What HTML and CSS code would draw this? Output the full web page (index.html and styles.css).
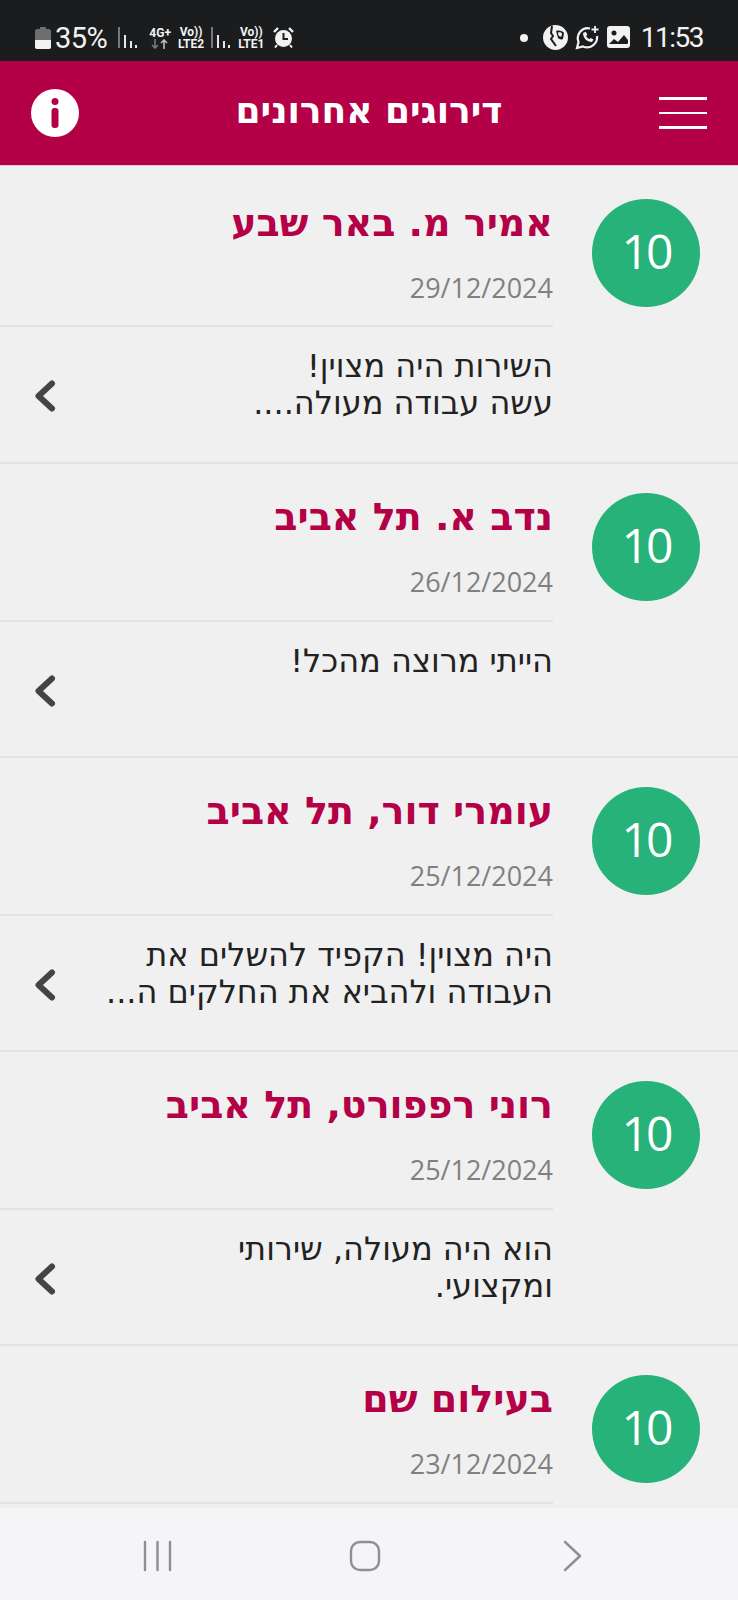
FILE: index.html
```html
<!DOCTYPE html>
<html lang="he" dir="rtl">
<head>
  <meta charset="utf-8" />
  <title>דירוגים אחרונים</title>
  <meta name="viewport" content="width=device-width, initial-scale=1" />
  <link rel="stylesheet" href="styles.css">
</head>
<body>
  <div class="screen">
    <!-- STATUS BAR -->
    <div class="statusBar" dir="ltr">
      <div class="statusGroup">
        <svg class="battery" width="16" height="22" viewBox="0 0 16 22">
          <path d="M5 0h6v2h3a2 2 0 0 1 2 2v16a2 2 0 0 1-2 2H2a2 2 0 0 1-2-2V4a2 2 0 0 1 2-2h3z" fill="#6d6e70" />
          <path d="M0 13h16v7a2 2 0 0 1-2 2H2a2 2 0 0 1-2-2z" fill="#f2f2f2" />
        </svg>
        <span class="percent">35%</span>
        <svg class="signal" width="20" height="21" viewBox="0 0 20 21">
          <rect x="0" y="0" width="2" height="21" fill="#77787a" />
          <rect x="6" y="8" width="2" height="13" fill="#e8e8e8" />
          <rect x="12" y="14" width="2" height="7" fill="#e8e8e8" />
          <rect x="17" y="18" width="2" height="3" fill="#e8e8e8" />
        </svg>
        <div class="netTag netFour">
          <span>4G+</span>
          <svg width="18" height="10" viewBox="0 0 18 10" fill="none" stroke-width="1.6">
            <path d="M4 0v9M1 6l3 3 3-3" stroke="#77787a" />
            <path d="M13 10V1M10 4l3-3 3 3" stroke="#bdbdbd" />
          </svg>
        </div>
        <div class="netTag"><span>Vo))</span><span>LTE2</span></div>
        <svg class="signal" width="20" height="21" viewBox="0 0 20 21">
          <rect x="0" y="0" width="2" height="21" fill="#77787a" />
          <rect x="6" y="8" width="2" height="13" fill="#e8e8e8" />
          <rect x="12" y="14" width="2" height="7" fill="#e8e8e8" />
          <rect x="17" y="18" width="2" height="3" fill="#e8e8e8" />
        </svg>
        <div class="netTag"><span>Vo))</span><span>LTE1</span></div>
        <svg class="alarm" width="21" height="21" viewBox="0 0 21 21">
          <circle cx="10.5" cy="11.5" r="8.5" fill="#f2f2f2" />
          <path d="M10.5 6v6h4.5" fill="none" stroke="#1b1c1e" stroke-width="2" />
          <path d="M1 5l4-4M20 5l-4-4" stroke="#f2f2f2" stroke-width="2.4" />
          <path d="M4 18l-2 2.500M17 18l2 2.500" stroke="#f2f2f2" stroke-width="2" />
        </svg>
      </div>
      <div class="statusGroup">
        <span class="dot"></span>
        <svg class="appIcon" width="25" height="25" viewBox="0 0 25 25">
          <circle cx="12.500" cy="12.500" r="12.500" fill="#f2f2f2" />
          <path d="M9 1l-1 7 2 3-2 3 5 7" fill="none" stroke="#1b1c1e" stroke-width="2" />
          <path d="M13 6c3-1 7 0 8 2l-1 6c-2 1-4 0-5-1z" fill="#1b1c1e" />
          <path d="M15 7.500c2-.5 3 0 4 1l-.5 3c-1 0-2 0-3-1z" fill="#f2f2f2" />
        </svg>
        <svg class="appIcon" width="25" height="25" viewBox="0 0 25 25" fill="none" stroke="#f2f2f2">
          <path d="M15 3.500A10 10 0 0 0 3.500 17L2 23l6-1.600A10 10 0 0 0 22 11" stroke-width="2.200" />
          <path d="M8 8c0 5 4 9 9 9l1.500-2.500-3-1.500-1.200 1.200c-1.500-.7-2.500-1.800-3.200-3.200l1.200-1.200-1.500-3z" fill="#f2f2f2" stroke="none" />
          <path d="M20 1v7M16.500 4.500h7" stroke-width="1.800" />
        </svg>
        <svg class="appIcon" width="23" height="23" viewBox="0 0 23 23">
          <rect x="0" y="0" width="23" height="22" rx="3" fill="#f2f2f2" />
          <circle cx="7" cy="7" r="2.500" fill="#1b1c1e" />
          <path d="M2 18l5-5 4 3 6-7 4 5v3a1 1 0 0 1-1 1H3z" fill="#1b1c1e" />
        </svg>
        <span class="clock">11:53</span>
      </div>
    </div>

    <!-- HEADER -->
    <header class="topBar">
      <div class="menuBtn"><span></span><span></span><span></span></div>
      <h1>דירוגים אחרונים</h1>
      <svg class="infoBtn" width="48" height="48" viewBox="0 0 48 48">
        <circle cx="24" cy="24" r="24" fill="#fff" />
        <circle cx="24" cy="12.500" r="3.500" fill="#b30047" />
        <rect x="20.500" y="19" width="7" height="20" rx="3" fill="#b30047" />
      </svg>
    </header>

    <!-- LIST -->
    <main class="reviewList">
      <article class="review">
        <div class="score">10</div>
        <div class="reviewBody">
          <div class="reviewHead">
            <h2>אמיר מ. באר שבע</h2>
            <div class="reviewDate">29/12/2024</div>
          </div>
          <div class="reviewText">
            <p>השירות היה מצוין!<br>עשה עבודה מעולה....</p>
            <svg class="chevron" width="22" height="32" viewBox="0 0 22 32"><path d="M18 3.500 4.500 16 18 28.500" /></svg>
          </div>
        </div>
      </article>

      <article class="review">
        <div class="score">10</div>
        <div class="reviewBody">
          <div class="reviewHead">
            <h2>נדב א. תל אביב</h2>
            <div class="reviewDate">26/12/2024</div>
          </div>
          <div class="reviewText">
            <p>הייתי מרוצה מהכל!</p>
            <svg class="chevron" width="22" height="32" viewBox="0 0 22 32"><path d="M18 3.500 4.500 16 18 28.500" /></svg>
          </div>
        </div>
      </article>

      <article class="review">
        <div class="score">10</div>
        <div class="reviewBody">
          <div class="reviewHead">
            <h2>עומרי דור, תל אביב</h2>
            <div class="reviewDate">25/12/2024</div>
          </div>
          <div class="reviewText">
            <p>היה מצוין! הקפיד להשלים את<br>העבודה ולהביא את החלקים ה...</p>
            <svg class="chevron" width="22" height="32" viewBox="0 0 22 32"><path d="M18 3.500 4.500 16 18 28.500" /></svg>
          </div>
        </div>
      </article>

      <article class="review">
        <div class="score">10</div>
        <div class="reviewBody">
          <div class="reviewHead">
            <h2>רוני רפפורט, תל אביב</h2>
            <div class="reviewDate">25/12/2024</div>
          </div>
          <div class="reviewText">
            <p>הוא היה מעולה, שירותי<br>ומקצועי.</p>
            <svg class="chevron" width="22" height="32" viewBox="0 0 22 32"><path d="M18 3.500 4.500 16 18 28.500" /></svg>
          </div>
        </div>
      </article>

      <article class="review">
        <div class="score">10</div>
        <div class="reviewBody">
          <div class="reviewHead">
            <h2>בעילום שם</h2>
            <div class="reviewDate">23/12/2024</div>
          </div>
        </div>
      </article>
    </main>

    <!-- SYSTEM NAV -->
    <nav class="sysNav" dir="ltr">
      <svg width="32" height="32" viewBox="0 0 32 32" stroke="#8e8f93" stroke-width="2.400" stroke-linecap="round">
        <path d="M3 2v28M15.500 2v28M28 2v28" />
      </svg>
      <svg width="32" height="32" viewBox="0 0 32 32" fill="none" stroke="#8e8f93" stroke-width="2.400">
        <rect x="2" y="2" width="28" height="28" rx="9" />
      </svg>
      <svg width="32" height="32" viewBox="0 0 32 32" fill="none" stroke="#8e8f93" stroke-width="2.400" stroke-linecap="round" stroke-linejoin="round">
        <path d="M9 2l15 14L9 30" />
      </svg>
    </nav>
  </div>
</body>
</html>
```

FILE: styles.css
```css
/* ========== GLOBAL ========== */
* {
  box-sizing: border-box;
  margin: 0;
  padding: 0;
}
body {
  background: #f0f0f0;
  font-family: "DejaVu Sans", sans-serif;
  overflow: hidden;
}
.screen {
  display: flex;
  flex-direction: column;
  height: 1600px;
}

/* ========== STATUS BAR ========== */
.statusBar {
  flex: none;
  height: 61px;
  padding: 14px 35px 0 35px;
  display: flex;
  align-items: center;
  justify-content: space-between;
  background: #1b1c1e;
  color: #f2f2f2;
  font-family: "Roboto", sans-serif;
}
.statusGroup {
  display: flex;
  align-items: center;
}
.percent {
  font-size: 29px;
  letter-spacing: -0.5px;
  margin-left: 4px;
  margin-right: 11px;
}
.clock {
  font-size: 28px;
  letter-spacing: -1.5px;
  margin-left: 4px;
}
.netTag {
  display: flex;
  flex-direction: column;
  align-items: center;
  font-size: 12px;
  font-weight: 700;
  line-height: 12px;
  margin-left: 7px;
  margin-right: 7px;
}
.netFour {
  margin-left: 11px;
  margin-right: 0;
}
.alarm {
  margin-left: 2px;
}
.dot {
  width: 8px;
  height: 8px;
  border-radius: 50%;
  background: #f2f2f2;
  margin-right: 15px;
}
.appIcon {
  margin-right: 7px;
}

/* ========== HEADER ========== */
.topBar {
  flex: none;
  height: 105px;
  padding: 0 31px;
  display: flex;
  align-items: center;
  justify-content: space-between;
  background: #b30047;
  border-bottom: 1px solid #d9d0d4;
}
.topBar h1 {
  margin-bottom: 6px;
  color: #fff;
  font-size: 36px;
  font-weight: 700;
}
.menuBtn {
  width: 48px;
  display: flex;
  flex-direction: column;
  gap: 12px;
}
.menuBtn span {
  display: block;
  height: 2.500px;
  background: #fff;
}

/* ========== LIST ========== */
.reviewList {
  flex: 1;
  overflow: hidden;
}
.review {
  height: 294px;
  padding: 29px 38px 0 0;
  display: flex;
  align-items: flex-start;
  gap: 39px;
  border-bottom: 2px solid #e2e2e2;
}
.review:first-child {
  height: 298px;
  padding-top: 33px;
}
.score {
  flex: none;
  width: 108px;
  height: 108px;
  padding-bottom: 5px;
  border-radius: 50%;
  background: #26b279;
  color: #fff;
  font-family: "Open Sans", sans-serif;
  font-size: 48px;
  font-weight: 500;
  letter-spacing: -3px;
  display: flex;
  align-items: center;
  justify-content: center;
}
.reviewBody {
  flex: 1;
}
.reviewHead {
  height: 129px;
  border-bottom: 2px solid #e2e2e2;
}
.review:first-child .reviewHead {
  height: 128px;
}
.reviewHead h2 {
  color: #b30047;
  font-size: 38px;
  font-weight: 700;
  line-height: 48px;
}
.reviewDate {
  margin-top: 23px;
  color: #808080;
  font-family: "Open Sans", sans-serif;
  font-size: 27px;
  line-height: 36px;
}
.reviewText {
  padding-top: 21px;
  display: flex;
  justify-content: space-between;
  align-items: flex-start;
}
.reviewText p {
  color: #222;
  font-size: 32px;
  line-height: 37px;
}
.chevron {
  flex: none;
  margin: 32px 0 0 34px;
  fill: none;
  stroke: #444;
  stroke-width: 6;
  stroke-linecap: round;
  stroke-linejoin: round;
}

/* ========== SYSTEM NAV ========== */
.sysNav {
  flex: none;
  height: 92px;
  padding: 3px 8px 0 0;
  display: flex;
  align-items: center;
  justify-content: center;
  gap: 175px;
  background: #f5f5f7;
}
```
